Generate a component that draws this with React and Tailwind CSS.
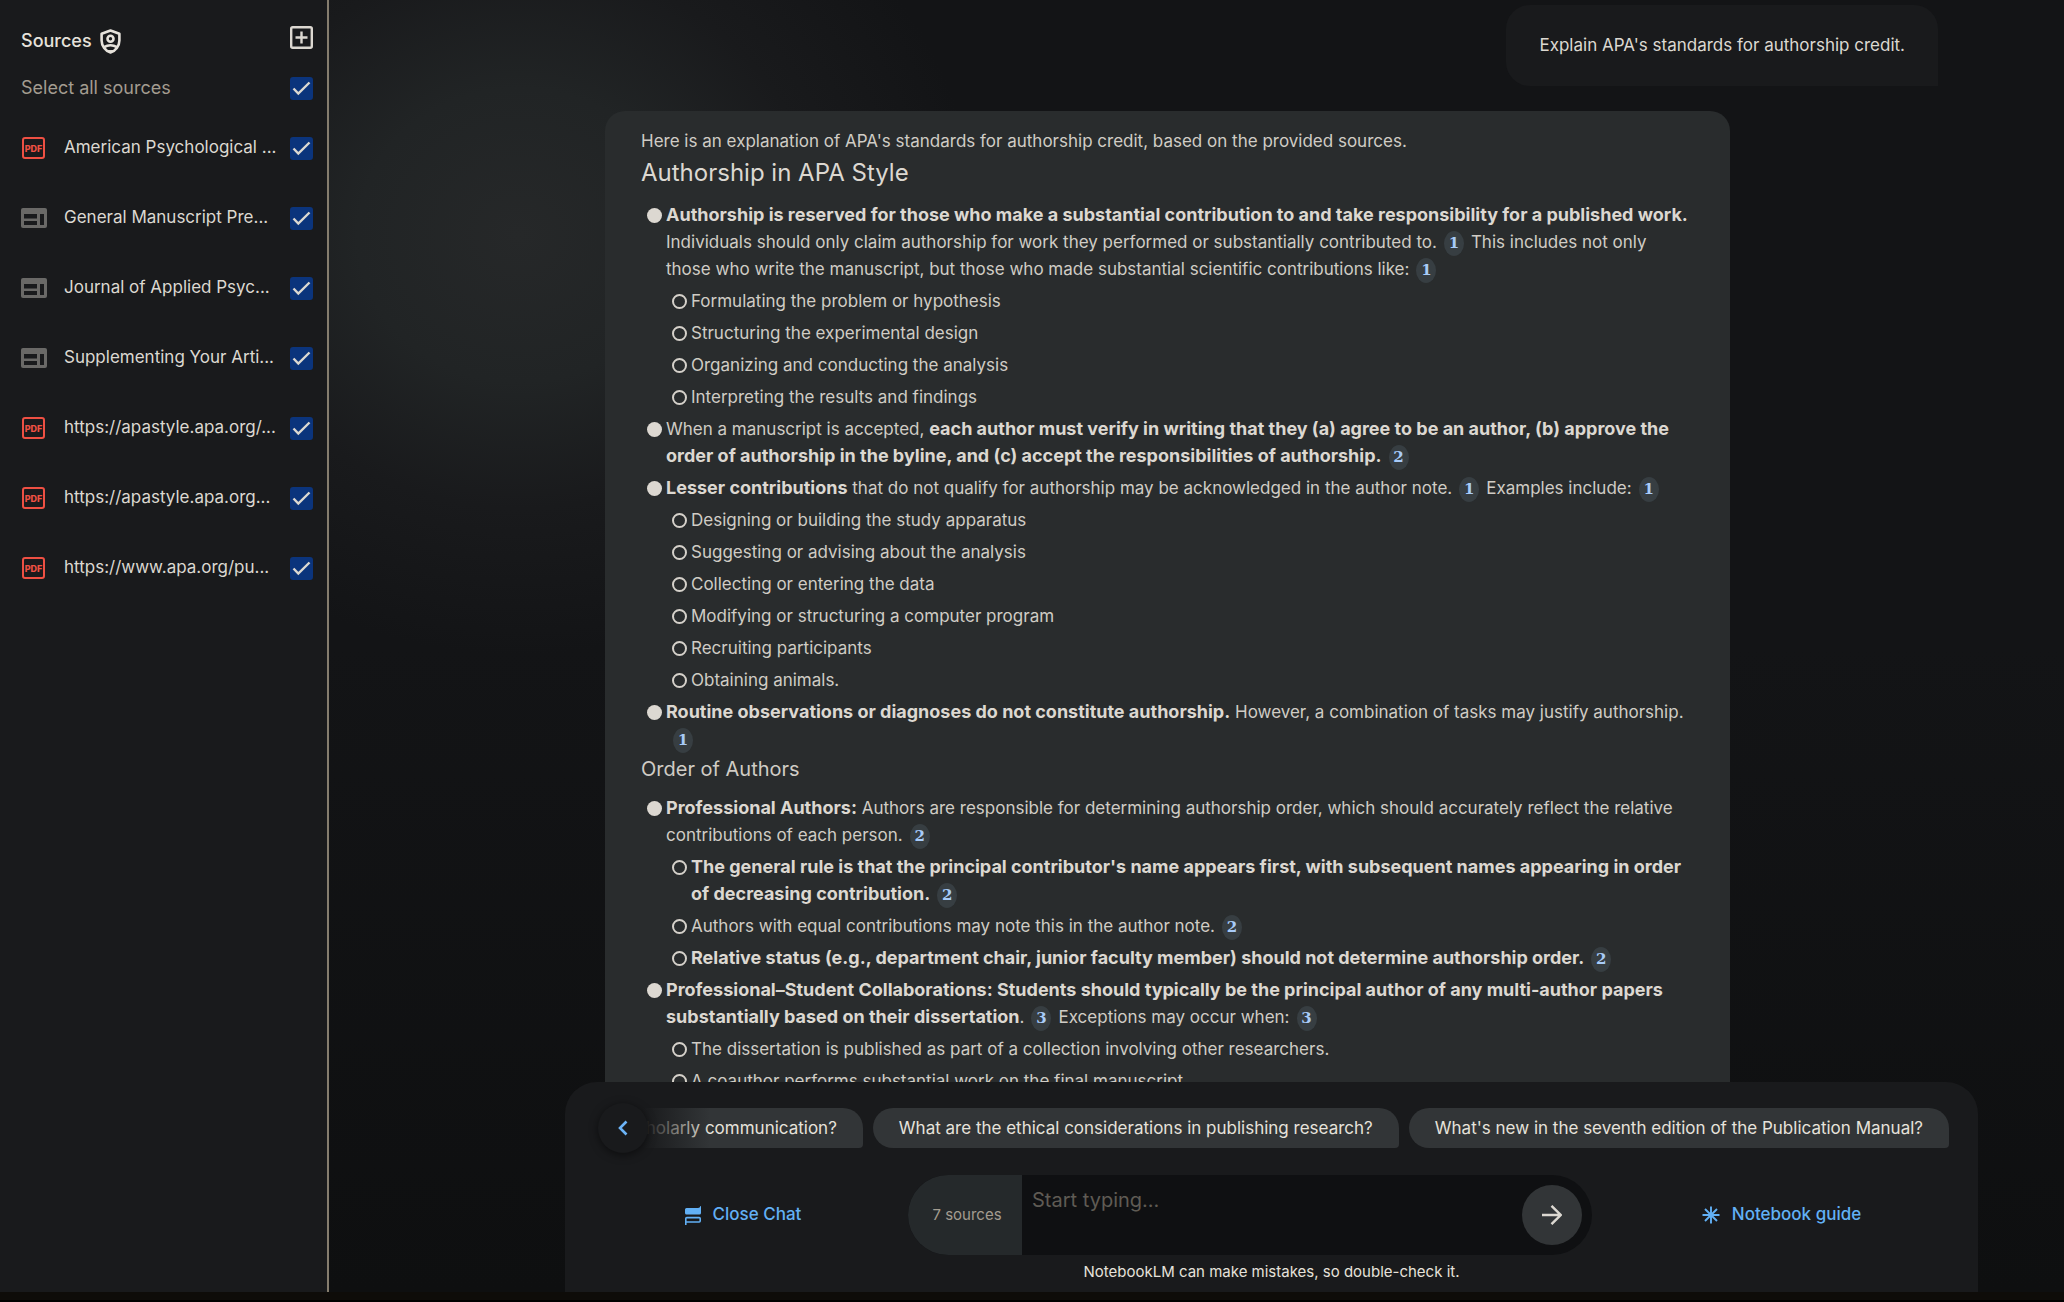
import React from 'react';

const SOURCES = [
  { type: 'pdf', name: 'American Psychological ...' },
  { type: 'web', name: 'General Manuscript Pre...' },
  { type: 'web', name: 'Journal of Applied Psyc...' },
  { type: 'web', name: 'Supplementing Your Arti...' },
  { type: 'pdf', name: 'https://apastyle.apa.org/...' },
  { type: 'pdf', name: 'https://apastyle.apa.org...' },
  { type: 'pdf', name: 'https://www.apa.org/pu...' },
];

function ShieldIcon() {
  return (
    <svg viewBox="0 0 21 25" className="h-[25px] w-[21px]" fill="none" stroke="#e6e2db" strokeWidth="2.6">
      <path d="M10.5 1.5 19.4 4.8V11.5C19.4 17 15.6 21.9 10.5 23.5 5.4 21.9 1.6 17 1.6 11.5V4.8Z" strokeLinejoin="round" />
      <circle cx="10.5" cy="9.8" r="3" />
      <path d="M4 18.2C8 15.8 13 15.8 17 18.2" />
      <path d="M6.5 21.8H14.5" strokeWidth="1.5" />
    </svg>
  );
}

function PdfIcon() {
  return (
    <span className="ml-px flex h-[22px] w-[23px] items-center justify-center rounded-[3px] border-2 border-[#ee5043] text-[9px] leading-none font-extrabold text-[#ee5043]">
      PDF
    </span>
  );
}

function WebIcon() {
  return (
    <svg viewBox="0 0 26 20" className="h-5 w-[26px]">
      <rect width="26" height="20" rx="2" fill="#6a6967" />
      <path d="M3 6H16V10.5H3ZM3 13H16V17H3ZM19 6H23V17H19Z" fill="#191a1c" />
    </svg>
  );
}

function Tick({ label }) {
  return (
    <span className="relative ml-auto flex size-[23px] shrink-0">
      <input type="checkbox" defaultChecked aria-label={label} className="size-[23px] appearance-none rounded-[3px] bg-[#0b347c]" />
      <svg viewBox="0 0 23 23" className="pointer-events-none absolute inset-0" fill="none" stroke="#dcd8d1" strokeWidth="2.4">
        <path d="M3.5 11.5 8.3 16.5 19.5 5.5" />
      </svg>
    </span>
  );
}

function Cite({ children }) {
  return (
    <button className="mx-[7px] -my-1 inline-flex h-[25px] w-5 items-center justify-center rounded-[50%] bg-[#373e42] align-middle font-[DejaVu_Serif,serif] text-[15px] leading-none font-bold text-[#a8cbf8]">
      {children}
    </button>
  );
}

function B({ children }) {
  return <strong className="text-lg leading-none font-bold text-[#dcd8d1]">{children}</strong>;
}

function Item({ children }) {
  return (
    <li className="flex gap-1">
      <span className="mt-[6px] size-[15px] shrink-0 rounded-full bg-[#dcd8d1]" />
      <div className="flex min-w-0 flex-1 flex-col gap-[5px]">{children}</div>
    </li>
  );
}

function Sub({ children }) {
  return (
    <li className="flex gap-1">
      <span className="mt-[6px] size-[15px] shrink-0 rounded-full border-2 border-[#d5d1ca]" />
      <p className="min-w-0 flex-1">{children}</p>
    </li>
  );
}

function SubList({ children }) {
  return <ul className="flex flex-col gap-[5px] pl-[6px]">{children}</ul>;
}

function Chip({ children }) {
  return (
    <button className="h-10 shrink-0 rounded-[20px] rounded-br-[4px] bg-[#323537] px-[26px] pt-px text-[17px] whitespace-nowrap text-[#e6e2db]">
      {children}
    </button>
  );
}

function Sidebar() {
  return (
    <aside className="flex w-[329px] shrink-0 flex-col border-r-2 border-[#857d6e] bg-[#191a1c] pr-[14px] pl-[21px]">
      <header className="flex items-center pt-[23px]">
        <h2 className="pt-1 text-lg leading-7 font-medium text-[#e6e2db]">Sources</h2>
        <span className="pt-1 pl-2"><ShieldIcon /></span>
        <button aria-label="Add source" className="ml-auto pb-1">
          <svg viewBox="0 0 23 23" className="size-[23px]" fill="none" stroke="#dcd8d1" strokeWidth="2.4">
            <rect x="1.2" y="1.2" width="20.6" height="20.6" rx="1.5" />
            <path d="M11.5 5.5V17.5M5.5 11.5H17.5" />
          </svg>
        </button>
      </header>
      <div className="mt-[19px] flex h-7 items-center text-lg text-[#a39c90]">
        Select all sources
        <Tick label="Select all sources" />
      </div>
      <ul className="mt-[11px]">
        {SOURCES.map((s, i) => (
          <li key={i} className="flex h-[70px] items-center">
            <span className="flex w-[43px] shrink-0">{s.type === 'pdf' ? <PdfIcon /> : <WebIcon />}</span>
            <span className="text-[17px] whitespace-nowrap text-[#dcd8d1]">{s.name}</span>
            <Tick label={s.name} />
          </li>
        ))}
      </ul>
    </aside>
  );
}

function Answer() {
  return (
    <article className="mt-[25px] w-full max-w-[1125px] rounded-t-[20px] bg-[#292c2d] px-9 pt-[17px] text-[17px] leading-[27px] text-[#d0ccc5]">
      <p>Here is an explanation of APA's standards for authorship credit, based on the provided sources.</p>
      <h2 className="text-2xl leading-9 text-[#dcd8d1]">Authorship in APA Style</h2>
      <ul className="mt-[11px] flex flex-col gap-[5px] pl-[6px]">
        <Item>
          <p>
            <B>Authorship is reserved for those who make a substantial contribution to and take responsibility for a published work.</B>{' '}
            Individuals should only claim authorship for work they performed or substantially contributed to.<Cite>1</Cite>This includes not only
            those who write the manuscript, but those who made substantial scientific contributions like:<Cite>1</Cite>
          </p>
          <SubList>
            <Sub>Formulating the problem or hypothesis</Sub>
            <Sub>Structuring the experimental design</Sub>
            <Sub>Organizing and conducting the analysis</Sub>
            <Sub>Interpreting the results and findings</Sub>
          </SubList>
        </Item>
        <Item>
          <p>
            When a manuscript is accepted,{' '}
            <B>each author must verify in writing that they (a) agree to be an author, (b) approve the order of authorship in the byline, and (c) accept the responsibilities of authorship.</B>
            <Cite>2</Cite>
          </p>
        </Item>
        <Item>
          <p>
            <B>Lesser contributions</B> that do not qualify for authorship may be acknowledged in the author note.<Cite>1</Cite>Examples include:<Cite>1</Cite>
          </p>
          <SubList>
            <Sub>Designing or building the study apparatus</Sub>
            <Sub>Suggesting or advising about the analysis</Sub>
            <Sub>Collecting or entering the data</Sub>
            <Sub>Modifying or structuring a computer program</Sub>
            <Sub>Recruiting participants</Sub>
            <Sub>Obtaining animals.</Sub>
          </SubList>
        </Item>
        <Item>
          <p>
            <B>Routine observations or diagnoses do not constitute authorship.</B> However, a combination of tasks may justify authorship.{' '}
            <Cite>1</Cite>
          </p>
        </Item>
      </ul>
      <h3 className="text-xl leading-8">Order of Authors</h3>
      <ul className="mt-[10px] flex flex-col gap-[5px] pl-[6px]">
        <Item>
          <p>
            <B>Professional Authors:</B> Authors are responsible for determining authorship order, which should accurately reflect the relative
            contributions of each person.<Cite>2</Cite>
          </p>
          <SubList>
            <Sub>
              <B>The general rule is that the principal contributor's name appears first, with subsequent names appearing in order of decreasing contribution.</B>
              <Cite>2</Cite>
            </Sub>
            <Sub>Authors with equal contributions may note this in the author note.<Cite>2</Cite></Sub>
            <Sub>
              <B>Relative status (e.g., department chair, junior faculty member) should not determine authorship order.</B>
              <Cite>2</Cite>
            </Sub>
          </SubList>
        </Item>
        <Item>
          <p>
            <B>Professional–Student Collaborations: Students should typically be the principal author of any multi-author papers substantially based on their dissertation</B>
            .<Cite>3</Cite>Exceptions may occur when:<Cite>3</Cite>
          </p>
          <SubList>
            <Sub>The dissertation is published as part of a collection involving other researchers.</Sub>
            <Sub>A coauthor performs substantial work on the final manuscript.</Sub>
          </SubList>
        </Item>
      </ul>
    </article>
  );
}

function Composer() {
  return (
    <footer className="shrink-0 rounded-t-[32px] bg-[#191a1c] pt-[26px] pb-[9px]">
      <div className="relative mr-[29px] ml-[33px]">
        <div className="flex justify-end gap-[10px] overflow-hidden pl-[45px]">
          <div className="flex min-w-0 flex-1 justify-end overflow-hidden"><Chip>scholarly communication?</Chip></div>
          <Chip>What are the ethical considerations in publishing research?</Chip>
          <Chip>What's new in the seventh edition of the Publication Manual?</Chip>
        </div>
        <div className="absolute top-0 left-0 h-10 w-28 bg-linear-to-r from-[#191a1c] from-40% to-transparent" />
        <button aria-label="Previous questions" className="absolute -top-[5px] left-0 flex size-[50px] items-center justify-center rounded-full bg-[#191a1c] shadow-[0_2px_8px_rgba(0,0,0,0.5)]">
          <svg viewBox="0 0 10 16" className="h-4 w-[10px]" fill="none" stroke="#6cb4f7" strokeWidth="2.6">
            <path d="M8.5 1.5 2 8 8.5 14.5" />
          </svg>
        </button>
      </div>
      <div className="mt-[27px] grid grid-cols-[330fr_684fr_379fr] pr-[7px] pl-[13px]">
        <button className="flex items-center justify-center gap-3 text-[17px] font-medium text-[#62b0f5]">
          <svg viewBox="0 0 16 19" className="h-[19px] w-4">
            <path d="M1.5 2H13Q15 2 15.5 0H16V7Q16 8.5 14.5 8.5H1.5Q0 8.5 0 7V3.5Q0 2 1.5 2Z" fill="#62b0f5" />
            <path d="M.8 19V12.6Q.8 11.6 1.8 11.6H14.2Q15.2 11.6 15.2 12.6V15Q15.2 16 14.2 16H.8" fill="none" stroke="#62b0f5" strokeWidth="1.6" />
          </svg>
          Close Chat
        </button>
        <div className="flex h-20 items-center overflow-hidden rounded-full bg-[#0f1012] pr-[10px]">
          <span className="flex h-full w-[114px] shrink-0 items-center justify-center bg-[#25292b] pl-1 text-[15px] text-[#a39c90]">7 sources</span>
          <textarea aria-label="Message" placeholder="Start typing..." className="h-full min-w-0 flex-1 resize-none bg-transparent px-[10px] pt-[11px] text-[20px] leading-7 text-[#dcd8d1] outline-none placeholder:text-[#5f5b54]" />
          <button aria-label="Send" className="flex size-[60px] shrink-0 items-center justify-center rounded-full bg-[#323537]">
            <svg viewBox="0 0 20 20" className="size-5" fill="none" stroke="#dcd8d1" strokeWidth="2.4">
              <path d="M0 10H18.5M9.5 .8 18.7 10 9.5 19.2" />
            </svg>
          </button>
        </div>
        <button className="flex items-center justify-center gap-3 text-[17px] font-medium text-[#62b0f5]">
          <svg viewBox="0 0 18 18" className="size-[18px]" stroke="#62b0f5" strokeWidth="1.9">
            <path d="M9 .5V17.5M.5 9H17.5M3 3 15 15M15 3 3 15" />
          </svg>
          Notebook guide
        </button>
      </div>
      <p className="mt-[6px] text-center text-[15px] leading-[22px] text-[#e6e2db]">NotebookLM can make mistakes, so double-check it.</p>
    </footer>
  );
}

export default function App() {
  return (
    <div className="flex h-screen flex-col bg-[#0b0a08] font-[Inter,sans-serif]">
      <div className="flex min-h-0 flex-1">
        <Sidebar />
        <main className="flex min-w-0 flex-1 flex-col bg-[#121315] bg-[radial-gradient(ellipse_460px_420px_at_190px_235px,#262829_0%,#212425_35%,#191a1c_65%,transparent_100%),linear-gradient(#131416,#131416_50%,#0e0f10)] pr-[86px] pl-[236px]">
          <section className="flex min-h-0 flex-1 flex-col overflow-hidden px-10 pt-[5px]">
            <p className="self-end rounded-[24px] rounded-br-none bg-[#191a1c] py-[27px] pr-[33px] pl-[33px] text-[17px] leading-[27px] text-[#dcd8d1]">
              Explain APA's standards for authorship credit.
            </p>
            <Answer />
          </section>
          <Composer />
        </main>
      </div>
      <div className="h-[10px] shrink-0 border-b-2 border-black bg-[#0e0c09]" />
    </div>
  );
}
